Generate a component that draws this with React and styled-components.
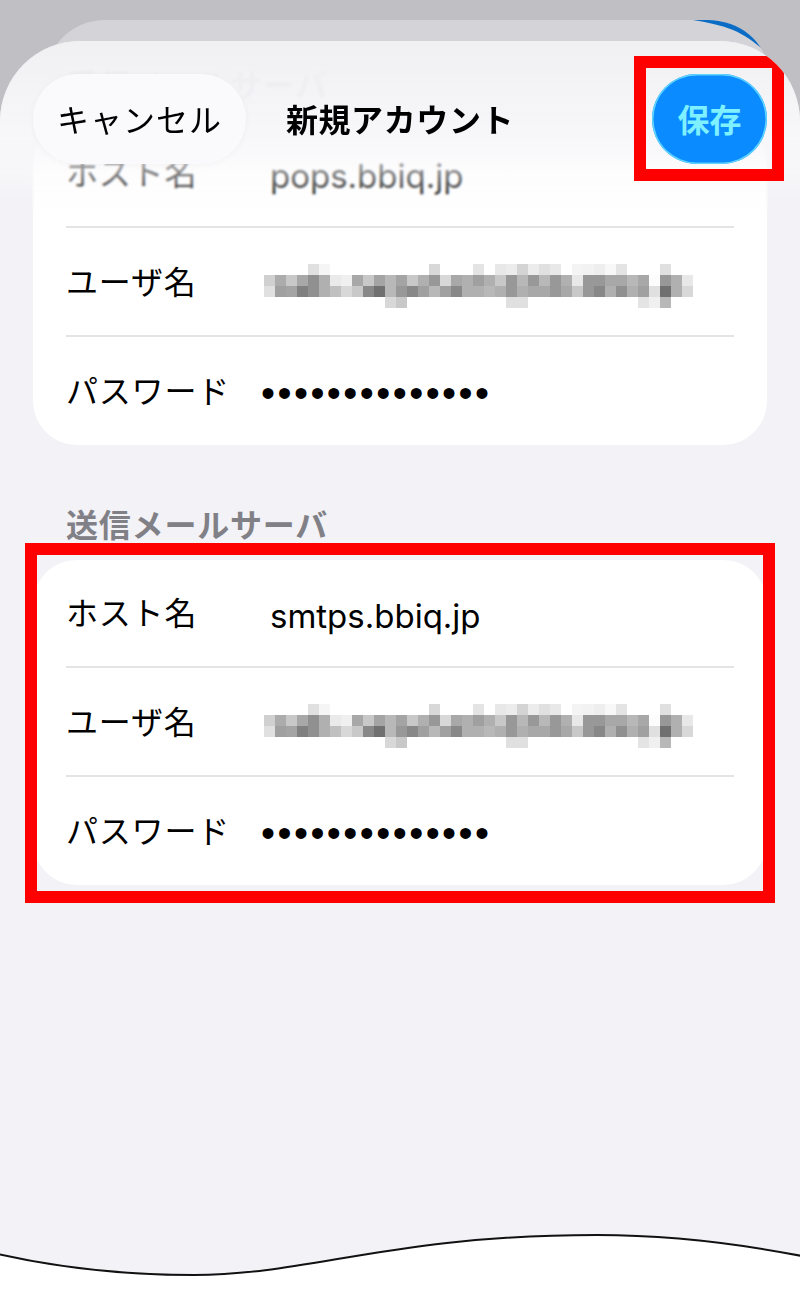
import React from "react";
import styled, { createGlobalStyle } from "styled-components";

const mosaic = [
  { 4: 0xe0, 5: 0xf5, 15: 0xd8, 19: 0xe4, 21: 0xe8, 22: 0xec, 23: 0xd4, 24: 0xec, 25: 0xe0, 26: 0xe8, 28: 0xf4, 29: 0xf2, 30: 0xee, 31: 0xf8, 32: 0xe4, 36: 0xe0 },
  [0xd0, 0xac, 0xc8, 0xa8, 0x90, 0xb0, 0xea, 0xf0, 0xa8, 0xc8, 0xa4, 0xb8, 0xa4, 0xc8, 0xb0, 0x98, 0xd8, 0xa8, 0xb0, 0xa0, 0xb0, 0xc8, 0x98, 0xb8, 0x98, 0xb8, 0x98, 0xb0, 0xe8, 0x98, 0x98, 0xa8, 0xa8, 0xb8, 0xa8, 0xfc, 0x98, 0xb0, 0xe8],
  [0xe0, 0xa0, 0xa4, 0x80, 0x90, 0xb0, 0xc0, 0xd8, 0xc8, 0x88, 0x70, 0xb8, 0x98, 0x88, 0xa0, 0xb8, 0xa0, 0x88, 0xb0, 0xb0, 0xb8, 0xb0, 0x98, 0xb0, 0xa8, 0xa8, 0x98, 0xa8, 0xc8, 0x98, 0x88, 0xb0, 0x90, 0xb0, 0xa0, 0xe0, 0x70, 0xb0, 0xd8],
  { 11: 0xd8, 12: 0xc8, 22: 0xe0, 23: 0xe0, 34: 0xe4, 35: 0xf0, 36: 0xb8 },
];

const GlobalStyle = createGlobalStyle`
  html, body {
    margin: 0;
    padding: 0;
    background: #fff;
  }
  body {
    font-family: Inter, "Noto Sans CJK JP", sans-serif;
  }
`;

const Screen = styled.div`
  position: relative;
  width: 800px;
  height: 1300px;
  padding-top: 20px;
  box-sizing: border-box;
  overflow: hidden;
  background: #bfbfc4;
`;

const BackSheet = styled.div`
  position: relative;
  height: 80px;
  margin: 0 33px 0 45px;
  border-radius: 60px 60px 0 0;
  border-top-right-radius: 60px 50px;
  background: #d3d3d8;
  overflow: hidden;

  &::before {
    content: "";
    position: absolute;
    inset: 0;
    background: #0a6cc4;
    clip-path: path("M648 0 L722 0 L722 33 C712 24 700 15 688 10 C675 5 662 2 648 0 Z");
  }
`;

const Sheet = styled.div`
  position: relative;
  height: 1259px;
  margin-top: -59px;
  padding: 26px 33px 0;
  box-sizing: border-box;
  border-radius: 80px 80px 0 0;
  background: #f2f2f7;
  overflow: hidden;
`;

const Section = styled.section`
  margin-bottom: 62px;
`;

const SectionLabel = styled.div`
  height: 36px;
  margin: 0 0 17px 33px;
  font-family: "Noto Sans CJK JP", sans-serif;
  font-size: 32px;
  line-height: 32px;
  font-weight: 600;
  letter-spacing: 0.8px;
  color: #808086;
`;

const Card = styled.div`
  position: relative;
  display: flex;
  flex-direction: column;
  height: 325px;
  padding: 0 33px;
  box-sizing: border-box;
  border-radius: 44px;
  background: #fff;
`;

const Row = styled.div`
  display: flex;
  align-items: center;
  height: 109px;
  box-sizing: border-box;
  border-top: 2px solid #e4e4e6;

  &:first-child {
    height: 106px;
    border-top: 0;
  }

  &:last-child {
    height: 110px;
  }
`;

const Label = styled.div`
  width: 204px;
  flex: none;
  padding-bottom: 4px;
  font-family: "Noto Sans CJK JP", sans-serif;
  font-size: 32px;
  letter-spacing: 0.8px;
  color: #000;
`;

const Value = styled.div`
  padding-top: 5px;
  font-family: Inter, "Liberation Sans", sans-serif;
  font-size: 33px;
  color: #000;
`;

const Dots = styled.div`
  margin-left: -9px;
  padding-top: 4px;
  font-family: "Liberation Sans", sans-serif;
  font-size: 40px;
  letter-spacing: 2.46px;
  line-height: 1;
  color: #000;
`;

const MosaicSvg = styled.svg`
  display: block;
  margin: 8px 0 0 -6px;
`;

const Header = styled.header`
  position: absolute;
  top: 0;
  left: 0;
  right: 0;
  height: 170px;
  padding: 33px 33px 0;
  box-sizing: border-box;
`;

const Scrim = styled.div`
  position: absolute;
  inset: 0;
  background: linear-gradient(
    rgba(240, 240, 243, 0.98) 0%,
    rgba(247, 247, 250, 0.94) 58%,
    rgba(251, 251, 252, 0.5) 78%,
    rgba(255, 255, 255, 0) 100%
  );
  backdrop-filter: blur(1.2px);
`;

const HeaderBar = styled.div`
  position: relative;
  display: grid;
  grid-template-columns: 1fr auto 1fr;
  align-items: center;
  height: 90px;
`;

const Title = styled.div`
  padding-bottom: 3px;
  font-family: "Noto Sans CJK JP", sans-serif;
  font-size: 32px;
  font-weight: 700;
  letter-spacing: 0.6px;
  color: #000;
`;

const CancelButton = styled.button`
  justify-self: start;
  width: 213px;
  height: 90px;
  padding: 0 0 3px;
  border: 0;
  border-radius: 45px;
  background: #fafafc;
  box-shadow: 0 1px 6px rgba(0, 0, 0, 0.04);
  font-family: "Noto Sans CJK JP", sans-serif;
  font-size: 32px;
  letter-spacing: 1px;
  color: #000;
`;

const SaveButton = styled.button`
  position: relative;
  justify-self: end;
  width: 115px;
  height: 90px;
  padding: 0 0 3px;
  border: 0;
  border-radius: 45px;
  background: #0a8bff;
  box-shadow: inset 0 0 0 1.5px #5fd4ff;
  font-family: "Noto Sans CJK JP", sans-serif;
  font-size: 32px;
  font-weight: 600;
  color: #7ff0ff;
`;

const Highlight = styled.div`
  position: absolute;
  top: ${(p) => p.$top}px;
  left: ${(p) => p.$left}px;
  right: ${(p) => p.$right}px;
  bottom: ${(p) => p.$bottom}px;
  border: 12px solid #ff0000;
  pointer-events: none;
`;

const Wave = styled.svg`
  position: absolute;
  left: 0;
  bottom: 0;
  display: block;
`;

function Mosaic() {
  const cells = [];
  mosaic.forEach((row, y) => {
    Object.entries(row).forEach(([x, v]) => {
      cells.push(
        <rect key={`${x}-${y}`} x={x * 11} y={y * 11} width="11" height="11" fill={`rgb(${v},${v},${v})`} />
      );
    });
  });
  return (
    <MosaicSvg width="429" height="44" viewBox="0 0 429 44" shapeRendering="crispEdges">
      {cells}
    </MosaicSvg>
  );
}

function Account({ host }) {
  return (
    <>
      <Row>
        <Label>ホスト名</Label>
        <Value>{host}</Value>
      </Row>
      <Row>
        <Label>ユーザ名</Label>
        <Mosaic />
      </Row>
      <Row>
        <Label>パスワード</Label>
        <Dots>••••••••••••••</Dots>
      </Row>
    </>
  );
}

export default function App() {
  return (
    <>
      <GlobalStyle />
      <Screen>
        <BackSheet />
        <Sheet>
          <Section>
            <SectionLabel>受信メールサーバ</SectionLabel>
            <Card>
              <Account host="pops.bbiq.jp" />
            </Card>
          </Section>
          <Section>
            <SectionLabel>送信メールサーバ</SectionLabel>
            <Card>
              <Account host="smtps.bbiq.jp" />
              <Highlight $top={-17} $left={-8} $right={-8} $bottom={-18} />
            </Card>
          </Section>
          <Header>
            <Scrim />
            <HeaderBar>
              <CancelButton>キャンセル</CancelButton>
              <Title>新規アカウント</Title>
              <SaveButton>
                保存
                <Highlight $top={-18} $left={-18} $right={-17} $bottom={-17} />
              </SaveButton>
            </HeaderBar>
          </Header>
        </Sheet>
        <Wave width="800" height="70" viewBox="0 1230 800 70">
          <path
            d="M-2 1254 C 60 1268 125 1275 194 1275 C 310 1275 390 1235 597 1235 C 670 1235 735 1243 802 1256 L 802 1310 L -2 1310 Z"
            fill="#fff"
            stroke="#111"
            strokeWidth="2"
          />
        </Wave>
      </Screen>
    </>
  );
}
